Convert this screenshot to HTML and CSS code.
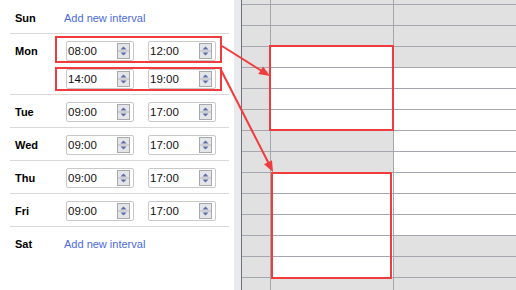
FILE: index.html
```html
<!DOCTYPE html>
<html>
<head>
<meta charset="utf-8">
<link rel="stylesheet" href="styles.css">
</head>
<body>
<div class="app">
  <div class="panel">
    <div class="row row-first">
      <div class="day">Sun</div>
      <a class="add" href="#">Add new interval</a>
    </div>
    <div class="row">
      <div class="day">Mon</div>
      <div class="intervals">
        <div class="interval">
          <div class="time"><span class="val">08:00</span><span class="spin"><svg width="13" height="16" viewBox="0 0 13 16"><rect x="0.5" y="0.5" width="12" height="15" class="sb"/><line x1="1" y1="8" x2="12" y2="8" class="sl"/><path d="M3.5 6.5 L6.5 3.5 L9.5 6.5 Z" class="st"/><path d="M3.5 9.5 L6.5 12.5 L9.5 9.5 Z" class="st"/></svg></span></div>
          <div class="time"><span class="val">12:00</span><span class="spin"><svg width="13" height="16" viewBox="0 0 13 16"><rect x="0.5" y="0.5" width="12" height="15" class="sb"/><line x1="1" y1="8" x2="12" y2="8" class="sl"/><path d="M3.5 6.5 L6.5 3.5 L9.5 6.5 Z" class="st"/><path d="M3.5 9.5 L6.5 12.5 L9.5 9.5 Z" class="st"/></svg></span></div>
        </div>
        <div class="interval">
          <div class="time"><span class="val">14:00</span><span class="spin"><svg width="13" height="16" viewBox="0 0 13 16"><rect x="0.5" y="0.5" width="12" height="15" class="sb"/><line x1="1" y1="8" x2="12" y2="8" class="sl"/><path d="M3.5 6.5 L6.5 3.5 L9.5 6.5 Z" class="st"/><path d="M3.5 9.5 L6.5 12.5 L9.5 9.5 Z" class="st"/></svg></span></div>
          <div class="time"><span class="val">19:00</span><span class="spin"><svg width="13" height="16" viewBox="0 0 13 16"><rect x="0.5" y="0.5" width="12" height="15" class="sb"/><line x1="1" y1="8" x2="12" y2="8" class="sl"/><path d="M3.5 6.5 L6.5 3.5 L9.5 6.5 Z" class="st"/><path d="M3.5 9.5 L6.5 12.5 L9.5 9.5 Z" class="st"/></svg></span></div>
        </div>
      </div>
    </div>
    <div class="row">
      <div class="day">Tue</div>
      <div class="intervals">
        <div class="interval">
          <div class="time"><span class="val">09:00</span><span class="spin"><svg width="13" height="16" viewBox="0 0 13 16"><rect x="0.5" y="0.5" width="12" height="15" class="sb"/><line x1="1" y1="8" x2="12" y2="8" class="sl"/><path d="M3.5 6.5 L6.5 3.5 L9.5 6.5 Z" class="st"/><path d="M3.5 9.5 L6.5 12.5 L9.5 9.5 Z" class="st"/></svg></span></div>
          <div class="time"><span class="val">17:00</span><span class="spin"><svg width="13" height="16" viewBox="0 0 13 16"><rect x="0.5" y="0.5" width="12" height="15" class="sb"/><line x1="1" y1="8" x2="12" y2="8" class="sl"/><path d="M3.5 6.5 L6.5 3.5 L9.5 6.5 Z" class="st"/><path d="M3.5 9.5 L6.5 12.5 L9.5 9.5 Z" class="st"/></svg></span></div>
        </div>
      </div>
    </div>
    <div class="row">
      <div class="day">Wed</div>
      <div class="intervals">
        <div class="interval">
          <div class="time"><span class="val">09:00</span><span class="spin"><svg width="13" height="16" viewBox="0 0 13 16"><rect x="0.5" y="0.5" width="12" height="15" class="sb"/><line x1="1" y1="8" x2="12" y2="8" class="sl"/><path d="M3.5 6.5 L6.5 3.5 L9.5 6.5 Z" class="st"/><path d="M3.5 9.5 L6.5 12.5 L9.5 9.5 Z" class="st"/></svg></span></div>
          <div class="time"><span class="val">17:00</span><span class="spin"><svg width="13" height="16" viewBox="0 0 13 16"><rect x="0.5" y="0.5" width="12" height="15" class="sb"/><line x1="1" y1="8" x2="12" y2="8" class="sl"/><path d="M3.5 6.5 L6.5 3.5 L9.5 6.5 Z" class="st"/><path d="M3.5 9.5 L6.5 12.5 L9.5 9.5 Z" class="st"/></svg></span></div>
        </div>
      </div>
    </div>
    <div class="row">
      <div class="day">Thu</div>
      <div class="intervals">
        <div class="interval">
          <div class="time"><span class="val">09:00</span><span class="spin"><svg width="13" height="16" viewBox="0 0 13 16"><rect x="0.5" y="0.5" width="12" height="15" class="sb"/><line x1="1" y1="8" x2="12" y2="8" class="sl"/><path d="M3.5 6.5 L6.5 3.5 L9.5 6.5 Z" class="st"/><path d="M3.5 9.5 L6.5 12.5 L9.5 9.5 Z" class="st"/></svg></span></div>
          <div class="time"><span class="val">17:00</span><span class="spin"><svg width="13" height="16" viewBox="0 0 13 16"><rect x="0.5" y="0.5" width="12" height="15" class="sb"/><line x1="1" y1="8" x2="12" y2="8" class="sl"/><path d="M3.5 6.5 L6.5 3.5 L9.5 6.5 Z" class="st"/><path d="M3.5 9.5 L6.5 12.5 L9.5 9.5 Z" class="st"/></svg></span></div>
        </div>
      </div>
    </div>
    <div class="row">
      <div class="day">Fri</div>
      <div class="intervals">
        <div class="interval">
          <div class="time"><span class="val">09:00</span><span class="spin"><svg width="13" height="16" viewBox="0 0 13 16"><rect x="0.5" y="0.5" width="12" height="15" class="sb"/><line x1="1" y1="8" x2="12" y2="8" class="sl"/><path d="M3.5 6.5 L6.5 3.5 L9.5 6.5 Z" class="st"/><path d="M3.5 9.5 L6.5 12.5 L9.5 9.5 Z" class="st"/></svg></span></div>
          <div class="time"><span class="val">17:00</span><span class="spin"><svg width="13" height="16" viewBox="0 0 13 16"><rect x="0.5" y="0.5" width="12" height="15" class="sb"/><line x1="1" y1="8" x2="12" y2="8" class="sl"/><path d="M3.5 6.5 L6.5 3.5 L9.5 6.5 Z" class="st"/><path d="M3.5 9.5 L6.5 12.5 L9.5 9.5 Z" class="st"/></svg></span></div>
        </div>
      </div>
    </div>
    <div class="row row-last">
      <div class="day">Sat</div>
      <a class="add" href="#">Add new interval</a>
    </div>
  </div>
  <div class="strip"></div>
  <div class="divider"></div>
  <div class="cal">
    <div class="c"></div><div class="c"></div><div class="c"></div>
    <div class="c"></div><div class="c"></div><div class="c"></div>
    <div class="c"></div><div class="c"></div><div class="c"></div>
    <div class="c"></div><div class="c w"></div><div class="c"></div>
    <div class="c"></div><div class="c w"></div><div class="c w"></div>
    <div class="c"></div><div class="c w"></div><div class="c w"></div>
    <div class="c"></div><div class="c w"></div><div class="c w"></div>
    <div class="c"></div><div class="c"></div><div class="c w"></div>
    <div class="c"></div><div class="c"></div><div class="c w"></div>
    <div class="c"></div><div class="c w"></div><div class="c w"></div>
    <div class="c"></div><div class="c w"></div><div class="c w"></div>
    <div class="c"></div><div class="c w"></div><div class="c w"></div>
    <div class="c"></div><div class="c w"></div><div class="c"></div>
    <div class="c"></div><div class="c w"></div><div class="c"></div>
    <div class="c"></div><div class="c"></div><div class="c"></div>
  </div>
  <svg class="annot" width="516" height="290" viewBox="0 0 516 290">
    <rect x="56" y="37" width="165" height="25" class="rb"/>
    <rect x="56" y="68" width="165" height="22" class="rb"/>
    <rect x="270" y="46" width="123" height="84" class="rb"/>
    <rect x="272" y="173" width="119" height="105" class="rb"/>
    <line x1="222" y1="46" x2="261" y2="70.5" class="rl"/>
    <polygon points="270,76 258.3,74 263.1,66.4" class="rh"/>
    <line x1="220" y1="68" x2="268.5" y2="163" class="rl"/>
    <polygon points="273,172 264,164.2 272,160.2" class="rh"/>
  </svg>
</div>
</body>
</html>
```

FILE: styles.css
```css
html, body {
  margin: 0;
  padding: 0;
  background: #fff;
}
body {
  width: 516px;
  height: 290px;
  overflow: hidden;
  font-family: "Liberation Sans", Arial, sans-serif;
  font-size: 11px;
  color: #000;
}
.app {
  position: relative;
  display: flex;
  width: 516px;
  height: 290px;
}
.panel {
  width: 234px;
  flex: none;
  background: #fff;
  display: flex;
  flex-direction: column;
}
.row {
  display: flex;
  align-items: flex-start;
  margin: 0 5px 0 10px;
  padding: 7px 0 5px 5px;
  border-bottom: 1px solid #d9d9d9;
}
.row-first {
  padding-top: 8px;
}
.row-last {
  border-bottom: none;
}
.day {
  width: 51px;
  flex: none;
  font-weight: bold;
  line-height: 20px;
  height: 20px;
}
.add {
  line-height: 20px;
  color: #4a6ae0;
  text-decoration: none;
  margin-left: -2px;
}
.intervals {
  display: flex;
  flex-direction: column;
  gap: 8px;
}
.interval {
  display: flex;
  gap: 14px;
}
.time {
  box-sizing: border-box;
  width: 68px;
  height: 20px;
  border: 1px solid #c9c9c9;
  border-radius: 2px;
  background: #fff;
  display: flex;
  align-items: center;
  padding: 0 3px 0 1px;
}
.val {
  flex: 1;
  font-size: 11.5px;
  line-height: 18px;
  color: #111;
}
.spin {
  display: flex;
  width: 13px;
  height: 16px;
}
.sb {
  fill: #e4e5e9;
  stroke: #a8a9ad;
  stroke-width: 1;
}
.sl {
  stroke: #b8b9be;
  stroke-width: 1;
}
.st {
  fill: #5d6ea6;
}
.strip {
  width: 7px;
  flex: none;
  background: #e9eaee;
}
.divider {
  width: 1px;
  flex: none;
  background: #6e717a;
}
.cal {
  flex: none;
  display: grid;
  grid-template-columns: 28px 122px 122px;
  grid-template-rows: 4px repeat(13, 20px) 12px;
  gap: 1px;
  background: #a4a7ae;
  width: 274px;
  height: 290px;
}
.c {
  background: #e1e1e1;
}
.c.w {
  background: #fff;
}
.annot {
  position: absolute;
  left: 0;
  top: 0;
  pointer-events: none;
}
.rb {
  fill: none;
  stroke: #f03c3c;
  stroke-width: 2;
}
.rl {
  stroke: #f03c3c;
  stroke-width: 2;
}
.rh {
  fill: #f03c3c;
}
```
